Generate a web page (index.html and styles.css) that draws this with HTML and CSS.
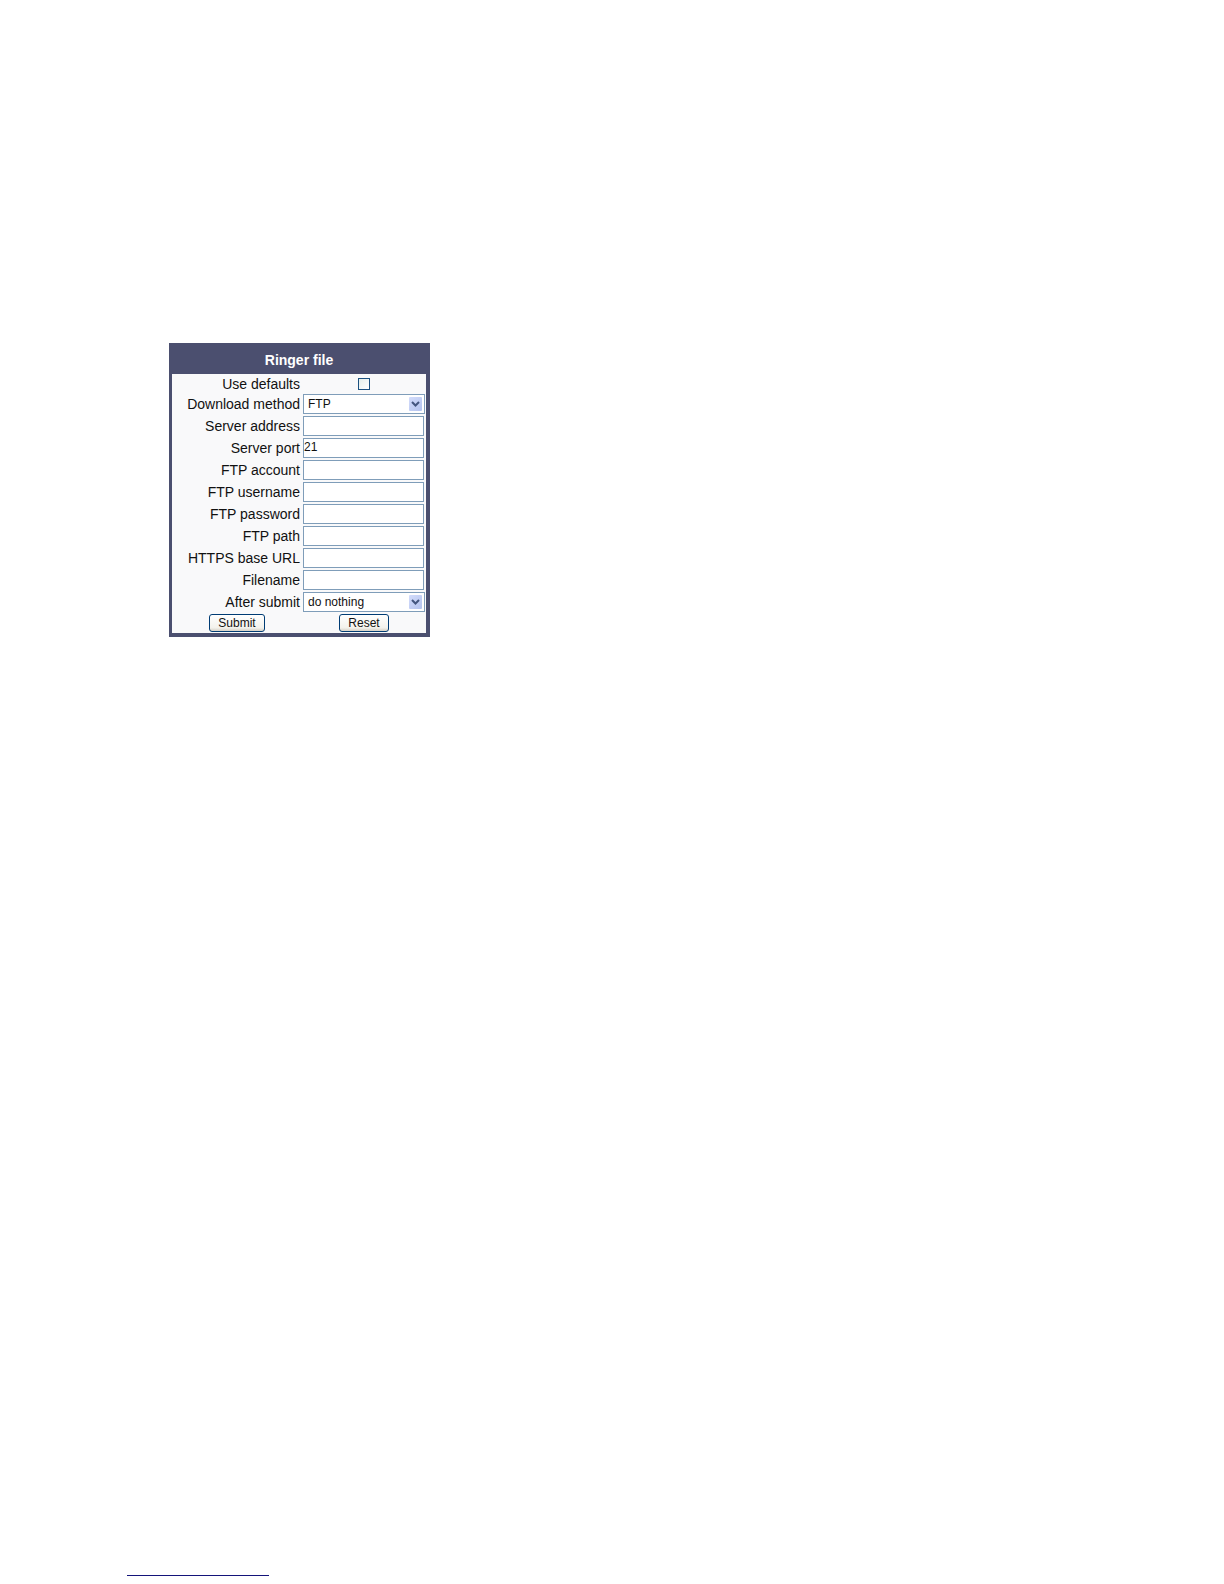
FILE: index.html
```html
<!DOCTYPE html>
<html lang="en">
<head>
    <meta charset="UTF-8">
    <title>Ringer file</title>
    <link rel="stylesheet" href="styles.css">
</head>
<body>
    <form class="panel">
        <h1>Ringer file</h1>
        <div class="fields">
            <div class="row check-row">
                <label for="useDefaults">Use defaults</label>
                <div class="cell centered"><input type="checkbox" id="useDefaults"></div>
            </div>
            <div class="row">
                <label for="method">Download method</label>
                <div class="cell select">
                    <select id="method">
                        <option>FTP</option>
                        <option>HTTP</option>
                        <option>HTTPS</option>
                    </select>
                    <svg class="arrow" viewBox="0 0 13 14"><path d="M3 5l3.5 3.5L10 5"/></svg>
                </div>
            </div>
            <div class="row">
                <label for="address">Server address</label>
                <div class="cell"><input type="text" id="address"></div>
            </div>
            <div class="row">
                <label for="port">Server port</label>
                <div class="cell"><input type="text" id="port" value="21"></div>
            </div>
            <div class="row">
                <label for="account">FTP account</label>
                <div class="cell"><input type="text" id="account"></div>
            </div>
            <div class="row">
                <label for="username">FTP username</label>
                <div class="cell"><input type="text" id="username"></div>
            </div>
            <div class="row">
                <label for="password">FTP password</label>
                <div class="cell"><input type="password" id="password"></div>
            </div>
            <div class="row">
                <label for="path">FTP path</label>
                <div class="cell"><input type="text" id="path"></div>
            </div>
            <div class="row">
                <label for="baseUrl">HTTPS base URL</label>
                <div class="cell"><input type="text" id="baseUrl"></div>
            </div>
            <div class="row">
                <label for="filename">Filename</label>
                <div class="cell"><input type="text" id="filename"></div>
            </div>
            <div class="row">
                <label for="after">After submit</label>
                <div class="cell select">
                    <select id="after">
                        <option>do nothing</option>
                        <option>start download</option>
                    </select>
                    <svg class="arrow" viewBox="0 0 13 14"><path d="M3 5l3.5 3.5L10 5"/></svg>
                </div>
            </div>
            <div class="row buttons">
                <div class="centered"><button type="submit">Submit</button></div>
                <div class="centered"><button type="reset">Reset</button></div>
            </div>
        </div>
    </form>
    <hr class="footer-line">
</body>
</html>
```

FILE: styles.css
```css
* {
    box-sizing: border-box;
}
body {
    display: flex;
    flex-direction: column;
    align-items: flex-start;
    min-height: 100vh;
    margin: 0;
    padding: 343px 0 8px 127px;
    background-color: white;
    color: #111;
    font-family: "Liberation Sans", Arial, sans-serif;
    font-size: 14px;
}
.panel {
    margin-left: 42px;
    padding: 0 4px 4px 3px;
    background-color: #4b4f6f;
}
h1 {
    margin: 0;
    padding-top: 3px;
    color: white;
    font-size: 14px;
    line-height: 28px;
    text-align: center;
}
.fields {
    background-color: #f9f9fa;
}
.row {
    display: grid;
    grid-template-columns: 130px 124px;
    align-items: center;
    height: 22px;
}
.check-row {
    height: 19px;
}
.row label {
    padding-right: 2px;
    line-height: 18px;
    text-align: right;
}
.cell {
    padding: 0 2px 0 1px;
}
.centered {
    display: flex;
    justify-content: center;
}
input[type="text"],
input[type="password"],
select {
    display: block;
    width: 100%;
    height: 20px;
    margin: 0;
    border: 1px solid #7f9db9;
    border-radius: 0;
    background-color: white;
    color: #111;
    font-family: inherit;
    font-size: 12px;
}
input[type="text"],
input[type="password"] {
    padding: 0 0 2px;
}
input[type="checkbox"] {
    appearance: none;
    width: 12px;
    height: 12px;
    margin: 0;
    border: 1px solid #1c5180;
    background: linear-gradient(135deg, #e6eeea, #fff);
}
input[type="checkbox"]:checked {
    background: #21a121;
}
.select {
    position: relative;
    padding-right: 1px;
}
select {
    appearance: none;
    padding: 0 18px 0 4px;
}
.arrow {
    position: absolute;
    top: 3px;
    right: 4px;
    width: 13px;
    height: 14px;
    border-radius: 1px;
    background: linear-gradient(135deg, #d3dcfb, #b4c3ee);
    pointer-events: none;
}
.arrow path {
    fill: none;
    stroke: #44567f;
    stroke-width: 2;
}
.buttons {
    height: 20px;
}
button {
    height: 18px;
    padding: 0 8px;
    border: 1px solid #003c74;
    border-radius: 3px;
    background: linear-gradient(#fff, #f3f2ec 80%, #d6d0c5);
    color: #111;
    font-family: inherit;
    font-size: 12px;
    line-height: 16px;
}
.footer-line {
    width: 142px;
    margin: auto 0 0;
    border: 0;
    border-top: 1px solid #14147a;
}
```
